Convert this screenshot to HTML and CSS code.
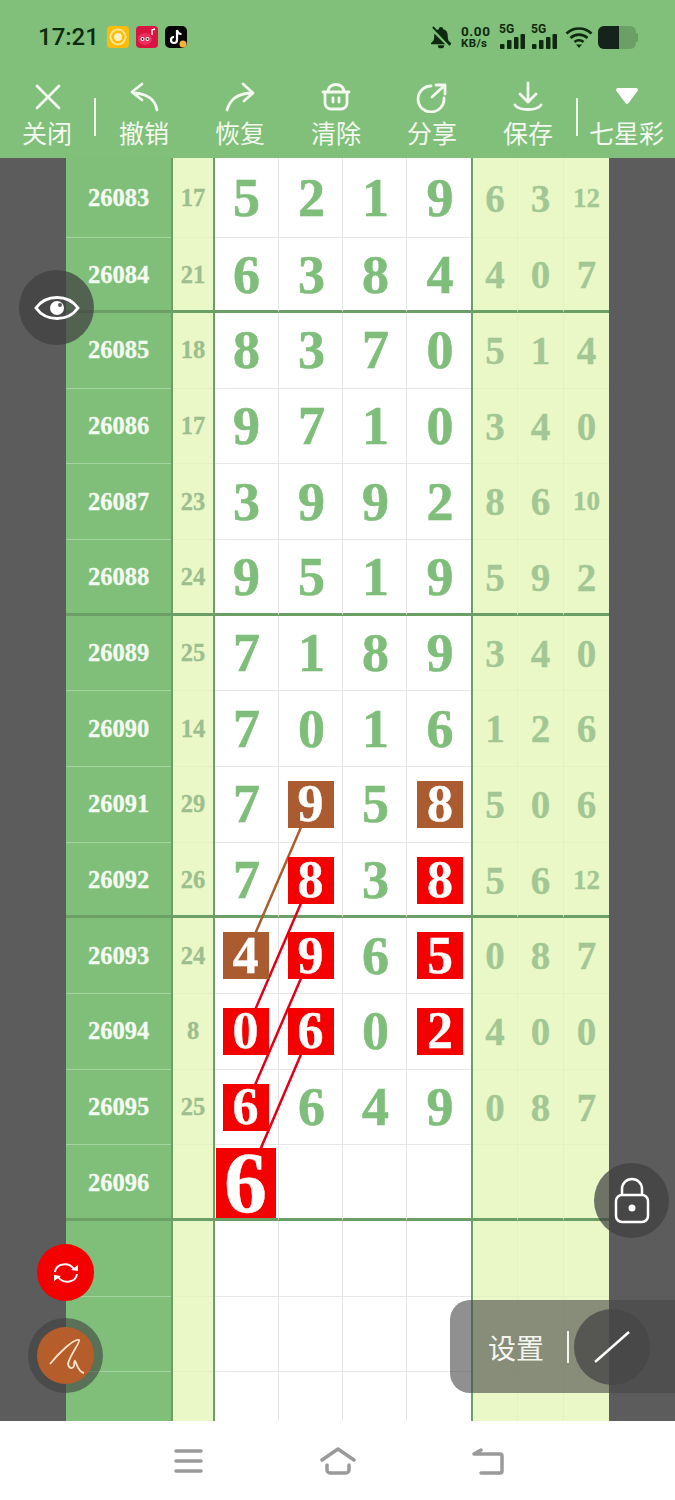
FILE: index.html
```html
<!DOCTYPE html>
<html lang="zh-CN">
<head>
<meta charset="utf-8">
<title>七星彩</title>
<link rel="stylesheet" href="styles.css">
</head>
<body>
<div class="phone">
  <header class="topbar">
    <div class="status">
      <span class="time">17:21</span>
      <div class="apps">
        <svg class="app" viewBox="0 0 22 22"><rect width="22" height="22" rx="4" fill="#fdbb0c"/><circle cx="11" cy="11" r="7.5" fill="none" stroke="#fde58a" stroke-width="2"/><circle cx="11" cy="11" r="4" fill="#fff1c0"/></svg>
        <svg class="app" viewBox="0 0 22 22"><rect width="22" height="22" rx="4" fill="#d9143f"/><ellipse cx="9" cy="13" rx="7" ry="6" fill="#ee2f5e"/><circle cx="6.5" cy="13" r="2" fill="#fff"/><circle cx="11.5" cy="13" r="2" fill="#fff"/><circle cx="6.5" cy="13" r="1" fill="#222"/><circle cx="11.5" cy="13" r="1" fill="#222"/><path d="M16 9V4l3-1" stroke="#fff" stroke-width="1.4" fill="none"/></svg>
        <svg class="app" viewBox="0 0 22 22"><rect width="22" height="22" rx="5" fill="#050505"/><path d="M12 4v10a3 3 0 1 1-3-3M12 4c.4 2.500 2 4 4.500 4" stroke="#fff" stroke-width="2.200" fill="none"/><circle cx="18" cy="18" r="3.500" fill="#f7b23b"/></svg>
      </div>
      <div class="sys">
        <svg class="bell" viewBox="0 0 22 24"><path d="M11 1a2.500 2.500 0 0 1 2.500 2.500c4 1 5 4 5 8.500 0 3 1 5 3.500 6.500V20H0v-1.500C2.500 17 3.500 15 3.500 12c0-4.500 1-7.500 5-8.500A2.500 2.500 0 0 1 11 1zM7.500 21h7a3.500 3.500 0 0 1-7 0z" fill="#0e2a0e"/><path d="M1 3l20 20" stroke="#7fc07a" stroke-width="3.500"/><path d="M2 1l19 20" stroke="#0e2a0e" stroke-width="2"/></svg>
        <div class="speed"><span class="speed-num">0.00</span><span class="speed-unit">KB/s</span></div>
        <div class="sig"><span class="sig-label">5G</span><svg class="bars" viewBox="0 0 25 15"><rect x="0" y="10" width="4.500" height="5" rx="1"/><rect x="7" y="6" width="4.500" height="9" rx="1"/><rect x="14" y="3" width="4.500" height="12" rx="1"/><rect x="20.500" y="0" width="4.500" height="15" rx="1"/></svg></div>
        <div class="sig"><span class="sig-label">5G</span><svg class="bars" viewBox="0 0 25 15"><rect x="0" y="10" width="4.500" height="5" rx="1"/><rect x="7" y="6" width="4.500" height="9" rx="1"/><rect x="14" y="3" width="4.500" height="12" rx="1"/><rect x="20.500" y="0" width="4.500" height="15" rx="1"/></svg></div>
        <svg class="wifi" viewBox="0 0 28 22"><path d="M1.500 7.500a18 18 0 0 1 25 0M5.500 12a12.500 12.500 0 0 1 17 0M9.500 16a6.500 6.500 0 0 1 9 0" fill="none" stroke="#0e2a0e" stroke-width="2.600"/><path d="M11 18.500h6l-3 3.500z" fill="#0e2a0e"/></svg>
        <svg class="batt" viewBox="0 0 40 23"><rect width="38" height="23" rx="6" fill="#6aa066"/><rect x="38" y="7" width="2" height="9" rx="1" fill="#6aa066"/><path d="M6 0h15v23H6a6 6 0 0 1-6-6V6a6 6 0 0 1 6-6z" fill="#14241a"/></svg>
      </div>
    </div>
    <nav class="tools">
      <div class="tool tool-first"><svg class="ticon" viewBox="0 0 32 32"><path d="M6 5l22 22M28 5L6 27"/></svg><span class="tlabel">关闭</span></div>
      <i class="tsep"></i>
      <div class="tool"><svg class="ticon" viewBox="0 0 32 32"><path d="M29 29C27 19 21 13 6 12M14 3L4 11l10 8"/></svg><span class="tlabel">撤销</span></div>
      <div class="tool"><svg class="ticon" viewBox="0 0 32 32"><path d="M3 29C6 19 12 13 27 12M19 3l10 9-9 8"/></svg><span class="tlabel">恢复</span></div>
      <div class="tool"><svg class="ticon" viewBox="0 0 32 32"><path d="M5 12v10a6 6 0 0 0 6 6h10a6 6 0 0 0 6-6V12M3 11h26M8 11C8 1 24 1 24 11M13 17v4M19 17v4"/></svg><span class="tlabel">清除</span></div>
      <div class="tool"><svg class="ticon" viewBox="0 0 32 32"><path d="M15 5A13 13 0 1 0 28 17M16 16L28 5M20 4h9v9"/></svg><span class="tlabel">分享</span></div>
      <div class="tool"><svg class="ticon" viewBox="0 0 32 32"><path d="M16 2v19M8 13l8 8 8-8M3 24c4 6 22 6 26 0"/></svg><span class="tlabel">保存</span></div>
      <i class="tsep"></i>
      <div class="tool tool-last"><svg class="ticon" viewBox="0 0 32 32"><path class="tfill" d="M7 7h18a2 2 0 0 1 1.600 3L17.500 22a2 2 0 0 1-3 0L5.400 10A2 2 0 0 1 7 7z"/></svg><span class="tlabel">七星彩</span></div>
    </nav>
  </header>

  <main class="board">
    <div class="sheet">
      <div class="row row-first"><div class="id">26083</div><div class="sum">17</div><div class="d">5</div><div class="d">2</div><div class="d">1</div><div class="d">9</div><div class="s">6</div><div class="s">3</div><div class="s s-small">12</div></div>
      <div class="row row-thick"><div class="id">26084</div><div class="sum">21</div><div class="d">6</div><div class="d">3</div><div class="d">8</div><div class="d">4</div><div class="s">4</div><div class="s">0</div><div class="s">7</div></div>
      <div class="row"><div class="id">26085</div><div class="sum">18</div><div class="d">8</div><div class="d">3</div><div class="d">7</div><div class="d">0</div><div class="s">5</div><div class="s">1</div><div class="s">4</div></div>
      <div class="row"><div class="id">26086</div><div class="sum">17</div><div class="d">9</div><div class="d">7</div><div class="d">1</div><div class="d">0</div><div class="s">3</div><div class="s">4</div><div class="s">0</div></div>
      <div class="row"><div class="id">26087</div><div class="sum">23</div><div class="d">3</div><div class="d">9</div><div class="d">9</div><div class="d">2</div><div class="s">8</div><div class="s">6</div><div class="s s-small">10</div></div>
      <div class="row row-thick"><div class="id">26088</div><div class="sum">24</div><div class="d">9</div><div class="d">5</div><div class="d">1</div><div class="d">9</div><div class="s">5</div><div class="s">9</div><div class="s">2</div></div>
      <div class="row"><div class="id">26089</div><div class="sum">25</div><div class="d">7</div><div class="d">1</div><div class="d">8</div><div class="d">9</div><div class="s">3</div><div class="s">4</div><div class="s">0</div></div>
      <div class="row"><div class="id">26090</div><div class="sum">14</div><div class="d">7</div><div class="d">0</div><div class="d">1</div><div class="d">6</div><div class="s">1</div><div class="s">2</div><div class="s">6</div></div>
      <div class="row"><div class="id">26091</div><div class="sum">29</div><div class="d">7</div><div class="d"><span class="mark mark-brown">9</span></div><div class="d">5</div><div class="d"><span class="mark mark-brown">8</span></div><div class="s">5</div><div class="s">0</div><div class="s">6</div></div>
      <div class="row row-thick"><div class="id">26092</div><div class="sum">26</div><div class="d">7</div><div class="d"><span class="mark mark-red">8</span></div><div class="d">3</div><div class="d"><span class="mark mark-red">8</span></div><div class="s">5</div><div class="s">6</div><div class="s s-small">12</div></div>
      <div class="row"><div class="id">26093</div><div class="sum">24</div><div class="d"><span class="mark mark-brown">4</span></div><div class="d"><span class="mark mark-red">9</span></div><div class="d">6</div><div class="d"><span class="mark mark-red">5</span></div><div class="s">0</div><div class="s">8</div><div class="s">7</div></div>
      <div class="row"><div class="id">26094</div><div class="sum">8</div><div class="d"><span class="mark mark-red">0</span></div><div class="d"><span class="mark mark-red">6</span></div><div class="d">0</div><div class="d"><span class="mark mark-red">2</span></div><div class="s">4</div><div class="s">0</div><div class="s">0</div></div>
      <div class="row"><div class="id">26095</div><div class="sum">25</div><div class="d"><span class="mark mark-red">6</span></div><div class="d">6</div><div class="d">4</div><div class="d">9</div><div class="s">0</div><div class="s">8</div><div class="s">7</div></div>
      <div class="row row-thick"><div class="id">26096</div><div class="sum"></div><div class="d"><span class="mark mark-red mark-big">6</span></div><div class="d"></div><div class="d"></div><div class="d"></div><div class="s"></div><div class="s"></div><div class="s"></div></div>
      <div class="row"><div class="id"></div><div class="sum"></div><div class="d"></div><div class="d"></div><div class="d"></div><div class="d"></div><div class="s"></div><div class="s"></div><div class="s"></div></div>
      <div class="row"><div class="id"></div><div class="sum"></div><div class="d"></div><div class="d"></div><div class="d"></div><div class="d"></div><div class="s"></div><div class="s"></div><div class="s"></div></div>
      <div class="row"><div class="id"></div><div class="sum"></div><div class="d"></div><div class="d"></div><div class="d"></div><div class="d"></div><div class="s"></div><div class="s"></div><div class="s"></div></div>
    </div>
    <svg class="links" viewBox="0 0 675 1263">
      <path class="link-brown" d="M311 646L246 797"/>
      <path class="link-red" d="M311 722L246 873M311 797L246 948M311 873L246 1025"/>
    </svg>
  </main>

  <footer class="navbar">
    <svg class="nav nav-menu" viewBox="0 0 30 24"><path d="M3 2h25M3 12h25M3 22h25"/></svg>
    <svg class="nav nav-home" viewBox="0 0 36 28"><path d="M2 13L18 2l16 11M7 18v5a3 3 0 0 0 3 3h16a3 3 0 0 0 3-3v-5"/></svg>
    <svg class="nav nav-back" viewBox="0 0 32 28"><path d="M2 7h26a2 2 0 0 1 2 2v15a2 2 0 0 1-2 2H9M2 7l7-4"/></svg>
  </footer>

  <div class="fab fab-eye"><svg class="fab-icon" viewBox="0 0 46 32"><path d="M2 16C12 2 34 2 44 16 34 30 12 30 2 16z" fill="none" stroke="#fff" stroke-width="3"/><circle cx="23" cy="16" r="7" fill="#fff"/><circle cx="26" cy="13" r="2" fill="#5a5a5a"/></svg></div>
  <div class="fab fab-lock"><svg class="fab-icon" viewBox="0 0 36 48"><path d="M8 19v-7a10 10 0 0 1 20 0v7" fill="none" stroke="#fff" stroke-width="2.500"/><rect x="2" y="18" width="32" height="27" rx="6" fill="none" stroke="#fff" stroke-width="2.500"/><circle cx="18" cy="31" r="3.500" fill="#fff"/></svg></div>
  <div class="fab-red"><svg class="fab-icon" viewBox="0 0 30 30"><path d="M4 14C5 6 17 3 23 11M26 16c-1 8-13 11-19 3" fill="none" stroke="#fff" stroke-width="2"/><path d="M20 12l7 1 0-6zM10 18l-7-1 0 6z" fill="#fff"/></svg></div>
  <div class="fab-ring"><div class="fab-brown"><svg class="fab-icon" viewBox="0 0 40 40"><path d="M4 28C12 18 28 2 33 4 35 6 24 18 22 28 23 33 27 33 28 30 28 27 28 26 29 25 31 28 32 36 38 37" fill="none" stroke="#fde3c8" stroke-width="1.800"/></svg></div></div>
  <div class="panel">
    <span class="panel-label">设置</span><i class="panel-sep"></i>
    <div class="panel-btn"><svg class="fab-icon" viewBox="0 0 38 34"><path d="M2 32L36 2" stroke="#fff" stroke-width="2.500"/></svg></div>
  </div>
</div>
</body>
</html>
```

FILE: styles.css
```css
* { box-sizing: border-box; }
html, body { margin: 0; padding: 0; }
body { width: 675px; height: 1500px; overflow: hidden; background: #fff; font-family: "Noto Sans CJK SC", "Noto Sans", sans-serif; }
.phone { position: relative; width: 675px; height: 1500px; display: flex; flex-direction: column; overflow: hidden; }

.topbar { height: 158px; background: #80c07a; display: flex; flex-direction: column; flex: none; }
.status { height: 76px; display: flex; align-items: center; padding: 0 37px 2px 38px; color: #0e2a0e; }
.time { font: 500 24px Roboto, sans-serif; width: 69px; }
.apps { display: flex; gap: 7px; margin-top: -1px; }
.app { width: 22px; height: 22px; display: block; }
.sys { margin-left: auto; display: flex; align-items: center; }
.bell { width: 20px; height: 24px; margin-right: 10px; }
.speed { display: flex; flex-direction: column; width: 38px; font-family: Roboto, sans-serif; font-weight: 700; line-height: 1; }
.speed-num { font-size: 13.500px; line-height: 13px; letter-spacing: .6px; }
.speed-unit { font-size: 11.500px; line-height: 11px; letter-spacing: .4px; }
.sig { position: relative; width: 32px; height: 24px; display: flex; align-items: flex-end; }
.sig-label { position: absolute; left: 0; top: -2px; font: 700 12px/12px Roboto, sans-serif; }
.bars { width: 25px; height: 15px; margin-left: 1px; fill: #0e2a0e; }
.wifi { width: 28px; height: 22px; margin-right: 5px; margin-left: 2px; }
.batt { width: 40px; height: 23px; }

.tools { display: flex; align-items: flex-start; height: 82px; padding-top: 5px; color: #f3f9ef; }
.tool { width: 96px; display: flex; flex-direction: column; align-items: center; flex: none; }
.tool-first { width: 94px; }
.tool-last { width: 97px; }
.ticon { width: 32px; height: 32px; fill: none; stroke: #f3f9ef; stroke-width: 2.800; stroke-linecap: round; stroke-linejoin: round; }
.tfill { fill: #fff; stroke: none; }
.tlabel { font-size: 25px; line-height: 34px; margin-top: 2px; white-space: nowrap; }
.tsep { width: 2px; height: 38px; margin-top: 17px; background: #eef7ea; flex: none; }

.board { position: relative; height: 1263px; flex: none; background: #5c5c5c; overflow: hidden; padding-left: 66px; }
.sheet { width: 543px; display: flex; flex-direction: column; }
.row { display: grid; grid-template-columns: 105px 2px 40px 2px 64px 64px 64px 64px 2px 45px 46px 45px; height: 75.670px; flex: none; font-family: "Liberation Serif", serif; font-weight: 700; background: #6b9f65; }
.row-first { height: 79.500px; }
.row > div { display: flex; align-items: center; justify-content: center; border-bottom: 1px solid #e6e6e6; }
.row-first > div, .row-thick > div { padding-top: 2px; }
.id { background: #7fbf7a; color: #f4fbf0; font-size: 24.500px; grid-column: 1; -webkit-text-stroke: .3px #f4fbf0; }
.row > .id { border-bottom-color: #a3d69e; }
.sum { background: #e9f8c6; color: #9dbe8e; font-size: 24.500px; grid-column: 3; -webkit-text-stroke: .3px #9dbe8e; }
.row > .sum { border-bottom-color: #e3f2c4; }
.d { background: #fff; color: #7fbe7a; font-size: 54px; border-right: 1px solid #e6e6e6; -webkit-text-stroke: .6px #7fbe7a; }
.row > .d:nth-child(n+4) { padding-left: 2px; }
.row > .d:nth-child(3) { grid-column: 5; }
.row > .d:nth-child(6) { border-right: 0; }
.row > .s:nth-child(7) { grid-column: 10; }
.s { background: #e9f8c6; color: #a3c794; font-size: 39px; border-right: 1px solid #e3f2c4; -webkit-text-stroke: .3px #a3c794; }
.row > .s { border-bottom-color: #e3f2c4; }
.s:last-child { border-right: 0; }
.row > .s-small { font-size: 27px; }
.row-thick > div, .row-thick > .id, .row-thick > .sum, .row-thick > .s { border-bottom: 3px solid #6b9f65; }

.mark { position: relative; z-index: 3; width: 46px; height: 47px; display: flex; align-items: center; justify-content: center; color: #fff; font-size: 52px; line-height: 1; -webkit-text-stroke: .4px #fff; }
.d:nth-child(3) .mark, .d:nth-child(4) .mark { margin-left: -2px; }
.mark-red { background: #f40000; }
.mark-brown { background: #aa5b2f; }
.row .mark-big { width: 60px; height: 70px; margin-left: -1px; font-size: 86px; }

.links { position: absolute; left: 0; top: 0; width: 675px; height: 1263px; z-index: 2; fill: none; stroke-width: 2.500; }
.link-brown { stroke: #aa5b2f; }
.link-red { stroke: #e0001c; }

.navbar { flex: 1; display: flex; align-items: center; background: #fff; padding: 0 171px 0 173px; justify-content: space-between; }
.nav { fill: none; stroke: #9a9a9a; stroke-width: 3.500; stroke-linecap: round; stroke-linejoin: round; }
.nav-menu { width: 30px; height: 24px; }
.nav-home { width: 36px; height: 28px; }
.nav-back { width: 32px; height: 28px; }

.fab { position: absolute; width: 75px; height: 75px; border-radius: 50%; background: rgba(64, 64, 64, .72); display: flex; align-items: center; justify-content: center; z-index: 5; }
.fab-eye { left: 19px; top: 270px; }
.fab-eye .fab-icon { width: 46px; height: 32px; }
.fab-lock { left: 594px; top: 1163px; }
.fab-lock .fab-icon { width: 36px; height: 48px; }
.fab-red { position: absolute; left: 37px; top: 1244px; width: 57px; height: 57px; border-radius: 50%; background: #f40000; display: flex; align-items: center; justify-content: center; z-index: 5; }
.fab-red .fab-icon { width: 30px; height: 30px; }
.fab-ring { position: absolute; left: 28px; top: 1318px; width: 75px; height: 75px; border-radius: 50%; background: rgba(64, 64, 64, .6); display: flex; align-items: center; justify-content: center; z-index: 5; }
.fab-brown { width: 57px; height: 57px; border-radius: 50%; background: #b55d2b; display: flex; align-items: center; justify-content: center; }
.fab-brown .fab-icon { width: 40px; height: 40px; }

.panel { position: absolute; left: 450px; top: 1300px; width: 225px; height: 93px; border-radius: 20px 0 0 20px; background: rgba(70, 70, 70, .6); display: flex; align-items: center; padding-left: 38px; z-index: 5; color: #f4f4f0; }
.panel-label { font-size: 28px; line-height: 38px; width: 79px; }
.panel-sep { width: 2px; height: 32px; background: #f4f4f0; }
.panel-btn { position: absolute; left: 124px; top: 9px; width: 76px; height: 76px; border-radius: 50%; background: rgba(70, 70, 70, .75); display: flex; align-items: center; justify-content: center; }
.panel-btn .fab-icon { width: 38px; height: 34px; }
```
